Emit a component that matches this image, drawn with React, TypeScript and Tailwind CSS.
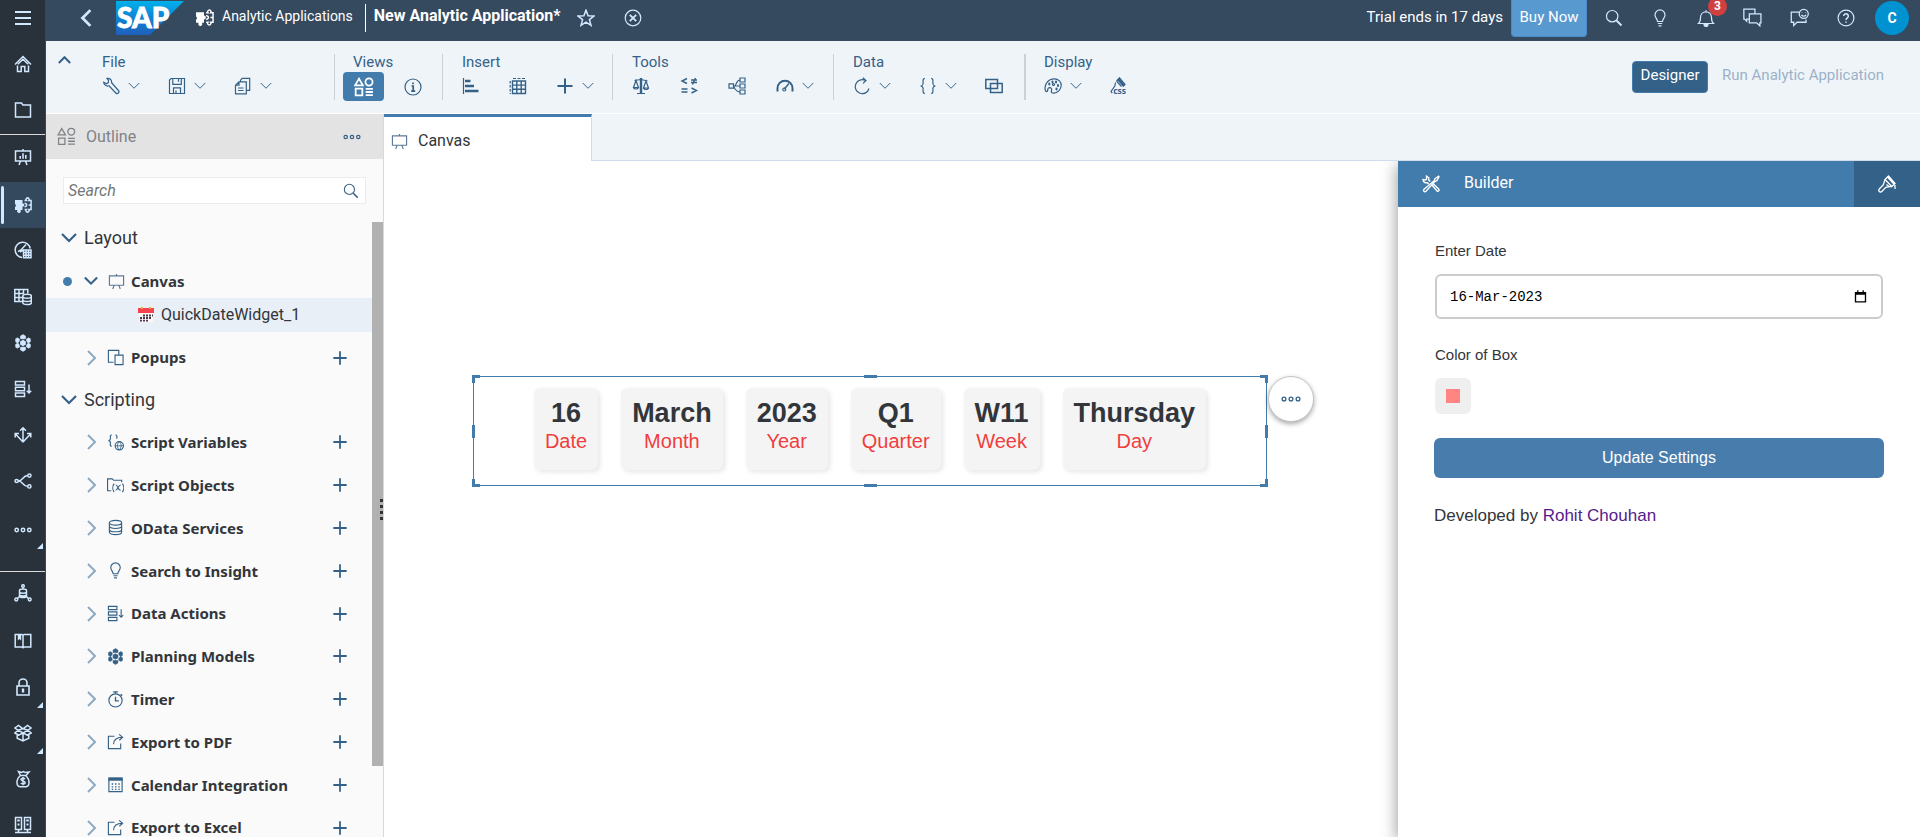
import React from "react";

type IconProps = { name: IconName; className?: string };

const puzzle = (
  <>
    <path d="M1 4h7.5v3.2a1.8 1.8 0 1 1 0 3.6V14H6.6a1.9 1.9 0 1 1-3.2 0H1v-3a1.7 1.7 0 0 0 0-3z" fill="currentColor" stroke="none" />
    <path d="M10.5 4.500h1.800a1.600 1.600 0 1 1 2.600 0h2.200v9h-2.300a1.600 1.600 0 1 1-2.600 0h-1.600M17 9h-2.400" />
    <path d="M10.500 7.500a1.600 1.600 0 1 1 0 3" />
  </>
);

const dataAction = (
  <>
    <path d="M1.500 1.500h9v3.400h-9zM1.500 7.300h9v3.400h-9zM1.500 13.100h9v3.400h-9z" />
    <path d="M15 4.500v8.500M12.800 10.800 15 13l2.200-2.200" />
  </>
);

const honeycomb = (
  <>
    <path d="m9 5.800 2.900 1.600v3.200L9 12.200l-2.900-1.600V7.400z" fill="currentColor" stroke="none" />
    <path
      d="m9 .6 2.600 1.500v2.600L9 5 6.400 4.700V2.100zM14.600 3.800l1.800 1v3l-2.200 1.400-1.700-2.300-.1-1.800zM16.400 10.200v3l-1.800 1-2.200-1.300.1-1.800 1.700-2.200zM9 17.400l-2.600-1.500v-2.600L9 13l2.600.3v2.600zM3.400 14.200l-1.800-1v-3l2.200-1.300 1.700 2.200.1 1.800zM1.600 7.800v-3l1.800-1 2.200 1.300-.1 1.800-1.700 2.300z"
      fill="currentColor"
      strokeWidth="0.500"
    />
  </>
);

const share = (
  <>
    <path d="M8 3.500H1.500v13h13V11" />
    <path d="M7 12c0-5 3.500-7.500 9-7.500M12.800 1.500 16.500 4.500l-3.400 3.200" />
  </>
);

const easel = <path d="M1.500 3h15v10h-15zM9 1v2M6.500 13 5 17M11.500 13l1.500 4" />;

const shapes = (
  <path d="M4.500 1.500 8 7.500H1zM13.500 1.300a3.200 3.200 0 1 1 0 6.400 3.200 3.200 0 0 1 0-6.400zM1.500 10.500h6v6h-6zM10.500 10.700h6.500M10.500 13.500h6.500M10.500 16.300h6.500" />
);

const bulb = (
  <path d="M6.500 12.500c0-2.600-2.500-3.600-2.500-6.600a5 5 0 0 1 10 0c0 3-2.500 4-2.500 6.600zM6.800 14.500h4.400M7.500 16.800h3" />
);

const icons = {
  menu: <path d="M1 3h16M1 9h16M1 15h16" strokeWidth="2" />,
  home: <path d="m1 9.500 8-8 8 8M3.500 10.500v6h3.700v-5h3.600v5h3.700v-6M3.800 9.300 9 4.300l5.200 5" />,
  folder: <path d="M1.500 2h6l1.400 2h7.600v12h-15z" />,
  boardChart: (
    <>
      <path d="M1.500 3h15v10h-15zM9 1v2M6.500 13 5 17M11.500 13l1.500 4" />
      <path d="M6.200 10.800V8M9 10.800V5.200M11.800 10.800V7" strokeWidth="1.600" />
    </>
  ),
  puzzle,
  gaugeGrid: (
    <>
      <path d="M16.200 7.500A7.600 7.600 0 1 0 8 16.400M4 10.500l3-1.500 5-5.500M6 11l3.500-2" />
      <path d="M9.500 9h7.500v7.800H9.500zM9.500 11.600H17M9.500 14.200H17M12 9v7.800M14.500 9v7.800" />
    </>
  ),
  tableDb: (
    <>
      <path d="M9 13.500H.8V1.500h13v4M.8 5.500H10M.8 9.500h7.500M5 1.500v12M9.500 1.500V6" />
      <path d="M8.800 8.200c0-1.200 2-2 4.300-2s4.300.8 4.300 2v6.400c0 1.200-2 2-4.300 2s-4.300-.8-4.300-2zM8.800 8.200c0 1.200 2 2 4.300 2s4.300-.8 4.300-2M8.800 11.500c0 1.200 2 2 4.300 2s4.300-.8 4.300-2" />
    </>
  ),
  honeycomb,
  dataAction,
  arrows: <path d="M9 16.500V1.800M6 4.800l3-3 3 3M9 16 1.500 8M1.200 11.500V7.500H5M9 16l7.500-8M13 7.500h3.800v4" />,
  flow: (
    <>
      <circle cx="2.600" cy="9" r="1.600" />
      <circle cx="15.400" cy="3.600" r="1.600" />
      <circle cx="15.400" cy="14.400" r="1.600" />
      <path d="M4.200 9c5 0 4-5.400 9.600-5.400M4.200 9c5 0 4 5.400 9.600 5.400" />
    </>
  ),
  dots: (
    <>
      <circle cx="2.700" cy="9" r="1.700" />
      <circle cx="9" cy="9" r="1.700" />
      <circle cx="15.300" cy="9" r="1.700" />
    </>
  ),
  dataNet: (
    <>
      <circle cx="9" cy="2" r="1.300" />
      <circle cx="2.300" cy="15.500" r="1.400" />
      <circle cx="15.700" cy="15.500" r="1.400" />
      <path d="M5.500 6.500c0-1 1.500-1.600 3.500-1.600s3.500.6 3.500 1.600v5.500c0 1-1.500 1.600-3.500 1.600S5.500 13 5.500 12zM5.500 8.300c1 1.200 6 1.200 7 0M5.500 11c1 1.200 6 1.200 7 0M3.500 14.500l2-2M14.500 14.500l-2-2M9 3.300v1.500" />
    </>
  ),
  book: (
    <>
      <path d="M9 3.500v12M1.200 2.500H8l1 .8 1-.8h6.800v12.500H10l-1 .8-1-.8H1.200z" />
      <path d="M3.800 2.500h3.400v6l-1.700-1.400-1.700 1.400z" fill="currentColor" stroke="none" />
    </>
  ),
  lock: (
    <>
      <path d="M3 8h12v9H3zM5 8V5a4 4 0 0 1 8 0v3" strokeWidth="1.600" />
      <path d="M9 10.500v4" strokeWidth="2.400" />
    </>
  ),
  box: <path d="M9 4.800 4.500 1.500.8 4 4 6.200zM9 4.800l4.500-3.300L17.200 4 14 6.200zM4 6.200 9 8.800l5-2.600M4 6.200.8 9l4 2.200L9 8.800l4.200 2.400 4-2.200L14 6.200M3.200 10.500v3.700L9 17l5.800-2.800v-3.700M9 8.800V17" />,
  moneyBag: (
    <>
      <path d="M6.500 5.500 4.500 1.500l3 1 2-1 1.500 1 4-.5-3 3.500M6.500 5.500h5C14.500 8 15.200 10.500 15 13c-.1 2.200-1.500 3.700-3.500 3.700h-5C4.500 16.700 3.100 15.200 3 13c-.2-2.500.5-5 3.500-7.500z" />
      <path d="M11 9.200c-.4-.7-1.200-1-2-1-1.100 0-2 .5-2 1.400 0 2 4.100 1 4.100 3 0 1-1 1.500-2.100 1.500-1 0-1.800-.4-2.200-1.100M9 7v8.300" />
    </>
  ),
  servers: (
    <>
      <path d="M1.500 1.500h6v12h-6zM10.500 1.500h6v12h-6zM4.500 13.500V16M13.500 13.500V16M1 16.500h16" />
      <path d="M3.200 4.500h2.600M12.200 4.500h2.600M3.500 8.500h2M12.500 8.500h2" strokeWidth="1.800" />
    </>
  ),
  star: <path d="m9 1.200 2.100 5.500 5.900.3-4.600 3.600 1.600 5.700L9 13.100l-5 3.200 1.600-5.700L1 7l5.900-.3z" />,
  close: (
    <>
      <circle cx="9" cy="9" r="7.800" />
      <path d="m5.800 5.800 6.400 6.400M12.200 5.800l-6.400 6.400" strokeWidth="1.800" />
    </>
  ),
  search: (
    <>
      <circle cx="7.200" cy="7.200" r="5.700" />
      <path d="m11.500 11.500 5 5" strokeWidth="1.800" />
    </>
  ),
  bulb,
  bell: (
    <>
      <path d="M1.500 14.500h15c-1.800-1.500-2-3-2-6C14.500 5 12 2.800 9 2.800S3.500 5 3.500 8.500c0 3-.2 4.500-2 6zM9 1.200v1.500" />
      <path d="M7 15.500h4a2 2 0 0 1-4 0z" fill="currentColor" />
    </>
  ),
  chat: <path d="M5.500 10.500H3.500v2L1.500 10.500h-.7v-9.500h10.500v4M6 5.500h11v8.500h-1v3l-3-3H6z" />,
  feedback: (
    <>
      <path d="M8.500 4H1.200v9.500h2.300v3l3.200-3h8.500V11" />
      <circle cx="13" cy="5.500" r="4.300" />
      <path d="M10.800 6.300c.8 1.900 3.600 1.900 4.400 0M11.300 4.200v.6M14.700 4.200v.6" />
    </>
  ),
  help: (
    <>
      <circle cx="9" cy="9" r="7.900" />
      <path d="M6.700 7a2.300 2.300 0 1 1 3.700 1.900c-.9.600-1.400 1-1.400 2M9 12.500v1.300" strokeWidth="1.500" />
    </>
  ),
  wrench: <path d="M5 1.400c2.600-.6 5 1.400 4.600 4.300l6.800 7.800a1.800 1.800 0 0 1-2.600 2.500L7 8.800c-2.500.8-5.300-.8-5.300-3.600l2.800 1.600 1.900-1.200.1-2.100z" />,
  save: <path d="M3 1.500h13.500v15h-15V3zM4.800 1.500v5.800h8.500V1.500M5.500 16.500v-5.700h7v5.700M8 13.500v3M10.500 2v2.800" />,
  copy: (
    <>
      <path d="M5 4.800h7.300v12H1.500V8.200zM5 4.800v3.400H1.500M6.500 4.800v-1.600L8.200 1.300h7.500v12h-3.400" />
      <path d="M4 11h5.500M4 13.500h5.500" />
    </>
  ),
  shapes,
  info: (
    <>
      <circle cx="9" cy="9" r="8" />
      <path d="M7.500 8H9.200v5M7.200 13.200h4M9 4.500v1.700" strokeWidth="1.700" />
    </>
  ),
  bars: (
    <>
      <path d="M1.500 1v16" />
      <path d="M3 4h5.500M3 9h9M3 14h13.500" strokeWidth="2.400" />
    </>
  ),
  grid: (
    <>
      <path d="M3.500 4h13v12.500h-13zM3.500 8.100h13M3.500 12.300h13M7.800 4v12.500M12.200 4v12.500" strokeWidth="1.400" />
      <path d="M4 1.500h13" strokeDasharray="3 1.500" />
      <path d="M1.200 4v13" strokeDasharray="2.500 1.500" />
    </>
  ),
  plus: <path d="M9 1.500v15M1.500 9h15" strokeWidth="2" />,
  scales: (
    <>
      <path d="M2.500 3.500 9 2.500l6.500 1.500M4 3.500 1.500 10.500h5zM14 4l-2.500 7h5zM1.500 10.500c.5 2 4.500 2 5 0M11.500 11c.5 2 4.500 2 5 0M5 16.500h8" />
      <path d="M9 1v15" strokeWidth="2.400" />
    </>
  ),
  operators: <path d="m7 1.500-5 2.500 5 2.500M11 3h6M11 5.500h6M15.500 1l-3 6.500M1.500 12h6M1.500 15h6M11.500 11l5 2.500-5 2.500" strokeWidth="1.400" />,
  hierarchy: <path d="M1 6.800h4.500v4.400H1zM12 1h5v4h-5zM12 7h5v4h-5zM12 13h5v4h-5zM5.500 9H12M12 3C8 3 8.500 9 6.500 9S8 15 12 15" />,
  gauge: (
    <>
      <path d="M1.500 14.500v-3.300a7.500 7.500 0 0 1 15 0v3.300" strokeWidth="2" />
      <path d="M13 6.500 8.300 12" strokeWidth="1.500" />
      <circle cx="8.300" cy="12.500" r="1.500" />
    </>
  ),
  refresh: <path d="M16 11.500A7 7 0 1 1 12.500 3.500M9.800.800l3.200 2.700-3 2.900" />,
  braces: <path d="M6 1.500C3 1.500 4.500 5 4 7c-.2 1-1 2-2.500 2 1.500 0 2.300 1 2.500 2 .5 2-1 5.500 2 5.500M12 1.500c3 0 1.500 3.500 2 5.500.2 1 1 2 2.500 2-1.500 0-2.300 1-2.500 2-.5 2 1 5.500-2 5.500" />,
  overlap: <path d="M.800 2.500h11.700v9H.800zM5.500 6.500h11.700v9H5.500z" strokeWidth="1.500" />,
  palette: (
    <>
      <path d="M10.500 1.800c3.600 0 6.700 2.600 6.700 6.400 0 4-3.300 7.800-7.500 8-2.400 0-2.600-1.300-2.200-2.700.5-1.600-.2-2.900-1.700-2.900C4.200 10.600 3.500 12 3.700 13.500c0 1.500-2 1.500-2.500-.5C.2 8 3.500 1.800 10.500 1.800z" />
      <path d="M5.300 6.600v1M8.500 4.400v1M12 4.600v1M14 8v1M12.500 11.500v1" strokeWidth="2" strokeLinecap="round" />
      <circle cx="9.500" cy="7.500" r="1" />
    </>
  ),
  css: (
    <>
      <path d="M6.500 4 9.500.8l5.500 6.700-2 2M6.500 4l5 5.500M5.500 5.500 4.800 9 1 14.500l1.200 1.700" />
      <path d="m8.200 2.200 5.600 6.500" strokeWidth="2.600" />
      <text x="3.200" y="17.300" fontSize="8.500" fontWeight="700" fill="currentColor" stroke="none" fontFamily="Noto Sans, sans-serif">css</text>
    </>
  ),
  easel,
  popups: <path d="M7 14H1.500V1.500h11V6M8.500 6.500h8.500v10H8.500z" />,
  scriptVar: (
    <>
      <path d="M5 1C2.500 1 4 4 3.500 5.500c-.2 1-.8 1.500-2 1.500 1.200 0 1.800.600 2 1.500C4 10 2.500 13 5 13M9 1c2.200 0 1.200 2.200 1.500 4" />
      <circle cx="13" cy="12.500" r="4.400" />
      <path d="M8.600 12.500h8.800M13 8.100c-2.600 2.500-2.600 6.300 0 8.800M13 8.100c2.600 2.500 2.600 6.300 0 8.800" strokeWidth=".900" />
    </>
  ),
  scriptObj: (
    <>
      <path d="M4.500 14.500H.600V2h5l1.500 1.500h8.400V5.500" />
      <path d="M7.500 7c-1.800 2.500-1.800 6.500 0 9M16.300 7c1.800 2.500 1.800 6.500 0 9" />
      <path d="M9.300 8.500c2.300-.3 2.200 6 5.200 5.500M14.500 8.500c-2.200 0-3.500 5.500-5.500 5.500" />
    </>
  ),
  database: <path d="M2.500 4c0-1.600 3-2.500 6.500-2.500s6.500.9 6.500 2.500v10c0 1.600-3 2.500-6.500 2.500S2.500 15.600 2.500 14zM2.500 4c0 1.600 3 2.500 6.500 2.500s6.500-.9 6.500-2.500M2.500 7.500C2.500 9.100 5.500 10 9 10s6.500-.9 6.500-2.500M2.500 11c0 1.600 3 2.500 6.500 2.500s6.500-.9 6.500-2.500" />,
  timer: (
    <>
      <circle cx="9" cy="10" r="7" />
      <path d="M6.500 1h5M9 1v2M9 6v4.500h3.500M14.500 3.500l1.500 1.500" strokeWidth="1.400" />
    </>
  ),
  share,
  calendar: (
    <>
      <path d="M2 2.500h14v14H2z" />
      <path d="M1.500 1.500h15v3.500h-15z" fill="currentColor" stroke="none" />
      <path d="M5 8.500h9M5 11.500h9M5 14.200h9" strokeWidth="1.500" strokeDasharray="1.500 2" />
    </>
  ),
  tools: (
    <path d="m10 10 5.200 6.200a1.300 1.300 0 0 0 1.600-1.900L11.500 9M8.200 6.500 6.700 5l.1-2.200L4.500 1.200 4.600 4 3.500 5 1 4.600C1.200 7.200 3.500 8.300 5.400 7.700L6.600 9M16.500 1.200l-3.700 2.600-.3 1.700L2 14.200a1.400 1.400 0 1 0 2 2.100L13 6.300l1.700-.5 2.300-4z" strokeWidth="1.400" />
  ),
  brush: (
    <>
      <path d="m10.500 1 6.500 7.500-3.200 3-6.800-7zM7 4.500 5.400 9.700 1.300 14a1.700 1.700 0 0 0 2.500 2.500l4-4.200 5.500-1M8.500 9.500l2.500 2M17 10v4" strokeWidth="1.300" />
      <path d="m9.700 1.800 6.400 7" strokeWidth="1.800" />
    </>
  ),
  datePicker: (
    <>
      <path d="M3 4.500h12v11H3z" strokeWidth="1.600" />
      <path d="M2.500 3.500h13v3.500h-13zM5 1.500h1.500v2H5zM11.500 1.500H13v2h-1.500z" fill="currentColor" stroke="none" />
    </>
  ),
};

type IconName = keyof typeof icons;

function Icon({ name, className = "size-[18px]" }: IconProps) {
  return (
    <svg viewBox="0 0 18 18" fill="none" stroke="currentColor" strokeWidth="1.200" className={`shrink-0 ${className}`} aria-hidden="true">
      {icons[name]}
    </svg>
  );
}

function Chevron({ dir, className }: { dir: "down" | "up" | "right" | "left"; className: string }) {
  const d = {
    down: "M1 4l7 7 7-7",
    up: "M1 11l7-7 7 7",
    right: "M5 1l7 7-7 7",
    left: "M11 1 4 8l7 7",
  }[dir];
  return (
    <svg viewBox="0 0 16 16" fill="none" stroke="currentColor" className={`shrink-0 ${className}`} aria-hidden="true">
      <path d={d} />
    </svg>
  );
}

function RailItem({ icon, label, active, more, className = "h-[46px]" }: { icon: IconName; label: string; active?: boolean; more?: boolean; className?: string }) {
  return (
    <button aria-label={label} className={`relative flex w-full shrink-0 items-center justify-center ${className} ${active ? "bg-[#34495e]" : ""}`}>
      {active && <span className="absolute inset-y-1 left-px w-[3px] rounded-sm bg-[#d1e8ff]" />}
      <Icon name={icon} className="size-[18px] stroke-[1.500]" />
      {more && (
        <svg viewBox="0 0 6 6" className="absolute right-0.5 bottom-0.5 size-1.5" aria-hidden="true">
          <path d="M6 0v6H0z" fill="currentColor" />
        </svg>
      )}
    </button>
  );
}

function Rail() {
  return (
    <nav className="flex w-[46px] shrink-0 flex-col overflow-hidden border-r border-[#3b4754] bg-[#29313a] text-[#d1e8ff]">
      <RailItem icon="menu" label="Menu" className="h-9" />
      <div className="h-[5px] shrink-0" />
      <RailItem icon="home" label="Home" />
      <RailItem icon="folder" label="Files" />
      <div className="mt-px h-px shrink-0 bg-[#d9d9d9]" />
      <RailItem icon="boardChart" label="Stories" className="h-[47px] pb-1" />
      <RailItem icon="puzzle" label="Analytic Applications" active />
      <RailItem icon="gaugeGrid" label="Analytics Designer" className="h-[46px] pb-0.5" />
      <RailItem icon="tableDb" label="Datasets" />
      <RailItem icon="honeycomb" label="Modeler" />
      <RailItem icon="dataAction" label="Data Actions" />
      <RailItem icon="arrows" label="Allocations" />
      <RailItem icon="flow" label="Predictive Scenarios" />
      <RailItem icon="dots" label="More" more className="h-[47px] pt-1" />
      <div className="mt-5 h-px shrink-0 bg-[#d9d9d9]" />
      <RailItem icon="dataNet" label="Connections" className="h-[46px] pb-1" />
      <RailItem icon="book" label="Content Network" />
      <RailItem icon="lock" label="Security" more />
      <RailItem icon="box" label="Transport" more />
      <RailItem icon="moneyBag" label="Currency" />
      <RailItem icon="servers" label="System" />
    </nav>
  );
}

function SapLogo() {
  return (
    <svg viewBox="0 0 68 34" className="h-[34px] w-[68px] shrink-0" role="img" aria-label="SAP">
      <defs>
        <linearGradient id="sap" x1="0" y1="0" x2="0" y2="1">
          <stop offset="0" stopColor="#00b1eb" />
          <stop offset="0.500" stopColor="#1183d2" />
          <stop offset="1" stopColor="#1e5fbb" />
        </linearGradient>
      </defs>
      <path d="M0 0h68L34 34H0z" fill="url(#sap)" />
      <text x="1" y="27" fontSize="28" fontWeight="900" fontFamily="Lato, Liberation Sans, sans-serif" fill="#fff" stroke="#fff" strokeWidth="0.800">SAP</text>
    </svg>
  );
}

function TopBar() {
  return (
    <header className="flex h-[41px] shrink-0 items-start justify-between bg-[#354a5f] text-white">
      <div className="flex h-[35px] items-center">
        <button aria-label="Back" className="ml-8 text-[#d1e8ff]">
          <Chevron dir="left" className="size-[18px] stroke-[2.500]" />
        </button>
        <div className="ml-5">
          <SapLogo />
        </div>
        <Icon name="puzzle" className="ml-[11px] size-[19px] stroke-[1.400]" />
        <a href="#apps" className="ml-2 flex h-7 items-center border-r border-white pr-3 pb-1 text-sm">Analytic Applications</a>
        <h1 className="ml-2 pb-1 text-base leading-6 font-bold">New Analytic Application*</h1>
        <button aria-label="Add to favorites" className="ml-4 text-[#d1e8ff]"><Icon name="star" className="size-[18px] stroke-[1.500]" /></button>
        <button aria-label="Close" className="ml-[29px] text-[#d1e8ff]"><Icon name="close" /></button>
      </div>
      <div className="flex h-[35px] items-center pr-[11px] text-[#d1e8ff]">
        <span className="text-white">Trial ends in 17 days</span>
        <button className="mr-[18px] ml-2 h-[37px] w-[76px] self-start rounded-b border border-t-0 border-[#4a8bcb] bg-[#5899d0] pb-0.5 text-white">Buy Now</button>
        <div className="mr-5 flex items-center gap-7">
          <button aria-label="Search"><Icon name="search" className="size-[18px]" /></button>
          <button aria-label="Tips"><Icon name="bulb" className="size-[18px]" /></button>
          <button aria-label="Notifications, 3 new" className="relative">
            <Icon name="bell" className="size-[18px]" />
            <span className="absolute -top-3 left-[11px] flex size-[19px] items-center justify-center rounded-full bg-[#d13f3f] text-xs font-bold text-white">3</span>
          </button>
          <button aria-label="Discussions"><Icon name="chat" className="size-[19px]" /></button>
          <button aria-label="Feedback"><Icon name="feedback" className="size-[19px]" /></button>
          <button aria-label="Help"><Icon name="help" className="size-[18px]" /></button>
        </div>
        <button aria-label="User profile" className="size-[34px] rounded-full bg-[#0092d1] text-sm font-bold text-white">C</button>
      </div>
    </header>
  );
}

function Tool({ icon, label, menu }: { icon: IconName; label: string; menu?: boolean }) {
  return (
    <button aria-label={label} className="flex items-center gap-2">
      <Icon name={icon} />
      {menu && <Chevron dir="down" className="size-3 stroke-[1.300]" />}
    </button>
  );
}

function ToolGroup({ label, className, gap = "gap-7", children }: { label: string; className: string; gap?: string; children: React.ReactNode }) {
  return (
    <section className={`flex h-[46px] shrink-0 flex-col border-[#c8d0da] ${className}`}>
      <h2 className="h-[18px] leading-4">{label}</h2>
      <div className={`flex h-7 items-center ${gap}`}>{children}</div>
    </section>
  );
}

function Toolbar() {
  return (
    <div className="flex h-[72px] shrink-0 items-start bg-[#eff4f9] pt-[13px] text-[#346187]">
      <button aria-label="Collapse toolbar" className="mr-[31px] ml-3 flex h-3">
        <Chevron dir="up" className="size-[13px] stroke-[2.400]" />
      </button>
      <ToolGroup label="File" className="w-[233px] border-r">
        <Tool icon="wrench" label="Edit" menu />
        <Tool icon="save" label="Save" menu />
        <Tool icon="copy" label="Copy" menu />
      </ToolGroup>
      <section className="h-[46px] w-[108px] shrink-0 border-r border-[#c8d0da] pl-2">
        <h2 className="h-[18px] pl-[10px] leading-4">Views</h2>
        <div className="flex h-[29px] items-center gap-5">
          <button aria-label="Outline" className="flex h-[29px] w-[41px] items-center justify-center rounded bg-[#427cac] text-white">
            <Icon name="shapes" className="size-5 stroke-[1.600]" />
          </button>
          <button aria-label="Info"><Icon name="info" /></button>
        </div>
      </section>
      <ToolGroup label="Insert" className="w-[170px] border-r pl-[19px]" gap="gap-[29px]">
        <Tool icon="bars" label="Chart" />
        <Tool icon="grid" label="Table" />
        <Tool icon="plus" label="Add" menu />
      </ToolGroup>
      <ToolGroup label="Tools" className="w-[221px] border-r pl-[19px]" gap="gap-[30px]">
        <Tool icon="scales" label="Compare" />
        <Tool icon="operators" label="Formatting" />
        <Tool icon="hierarchy" label="Linked Analysis" />
        <Tool icon="gauge" label="Performance" menu />
      </ToolGroup>
      <ToolGroup label="Data" className="w-[192px] border-r-2 pl-[19px]">
        <Tool icon="refresh" label="Refresh" menu />
        <Tool icon="braces" label="Variables" menu />
        <Tool icon="overlap" label="Blending" />
      </ToolGroup>
      <ToolGroup label="Display" className="pl-[18px]">
        <Tool icon="palette" label="Theme" menu />
        <Tool icon="css" label="CSS editor" />
      </ToolGroup>
      <div className="ml-auto flex items-start pt-[7px] pr-9">
        <button className="h-8 w-[76px] rounded border border-[#427cac] bg-[#346187] pb-1 text-white">Designer</button>
        <button className="ml-[14px] h-7 text-[#9cb2c8]">Run Analytic Application</button>
      </div>
    </div>
  );
}

function WidgetIcon() {
  return (
    <svg viewBox="0 0 16 16" className="size-4 shrink-0" aria-hidden="true">
      <path d="M1 5h14v10H1z" fill="#fff5f5" />
      <path d="M0 1h16v5H0z" fill="#f4434f" />
      <path d="M3 0h2v2H3zM11 0h2v2h-2z" fill="#f3a53a" />
      <path d="M5 8.500h10M2 11h12M2 13.700h9" stroke="#4a3a50" strokeWidth="1.800" strokeDasharray="2 1" />
    </svg>
  );
}

const scripting: { icon: IconName; label: string }[] = [
  { icon: "scriptVar", label: "Script Variables" },
  { icon: "scriptObj", label: "Script Objects" },
  { icon: "database", label: "OData Services" },
  { icon: "bulb", label: "Search to Insight" },
  { icon: "dataAction", label: "Data Actions" },
  { icon: "honeycomb", label: "Planning Models" },
  { icon: "timer", label: "Timer" },
  { icon: "share", label: "Export to PDF" },
  { icon: "calendar", label: "Calendar Integration" },
  { icon: "share", label: "Export to Excel" },
];

function TreeRow({ icon, label, className }: { icon: IconName; label: string; className: string }) {
  return (
    <li className={`flex items-center pr-6 pl-[37px] ${className}`}>
      <button aria-label={`Expand ${label}`} className="text-[#8fa9c2]">
        <Chevron dir="right" className="size-4 stroke-[2]" />
      </button>
      <Icon name={icon} className="ml-2 size-[17px] text-[#346187]" />
      <span className="ml-[7px] grow font-['Noto_Sans'] text-[15px] font-bold">{label}</span>
      <button aria-label={`Add ${label}`} className="text-[#346187]">
        <Icon name="plus" className="size-4" />
      </button>
    </li>
  );
}

function SectionTitle({ label, className }: { label: string; className: string }) {
  return (
    <button className={`flex shrink-0 items-center gap-[7px] pl-[15px] text-lg ${className}`}>
      <Chevron dir="down" className="size-4 stroke-[2.200] text-[#346187]" />
      {label}
    </button>
  );
}

function Outline() {
  return (
    <aside className="relative flex w-[338px] shrink-0 flex-col overflow-hidden border-r border-[#d9d9d9] bg-[#fafafa] text-[#32363a]">
      <div className="flex h-[45px] shrink-0 items-center bg-[#e3e3e3] pr-[22px] pl-[11px] text-[#7f8286]">
        <Icon name="shapes" className="size-[19px]" />
        <h2 className="ml-[10px] grow text-base">Outline</h2>
        <button aria-label="Outline options" className="text-[#346187]"><Icon name="dots" className="size-[18px]" /></button>
      </div>
      <label className="mx-[17px] mt-[18px] flex h-[27px] shrink-0 items-center border border-[#ececec] bg-white px-1">
        <input type="search" placeholder="Search" aria-label="Search" className="min-w-0 grow text-base italic outline-none placeholder:text-[#74777a]" />
        <Icon name="search" className="mr-0.5 size-4 text-[#346187]" />
      </label>
      <div className="mt-[18px] flex min-h-0 grow">
        <div className="flex min-w-0 grow flex-col overflow-hidden">
          <SectionTitle label="Layout" className="h-8" />
          <div className="mt-[11px] mb-px flex h-8 shrink-0 items-center pl-[17px]">
            <span className="size-[9px] rounded-full bg-[#427cac]" />
            <button aria-label="Collapse Canvas" className="ml-3 text-[#346187]"><Chevron dir="down" className="size-[14px] stroke-[2.400]" /></button>
            <Icon name="easel" className="ml-[10px] size-[17px] text-[#5d7896]" />
            <span className="ml-[6px] font-['Noto_Sans'] text-[15px] font-bold">Canvas</span>
          </div>
          <div className="flex h-[34px] shrink-0 items-center gap-[7px] bg-[#e8eff7] pl-[92px]">
            <WidgetIcon />
            <span className="text-base">QuickDateWidget_1</span>
          </div>
          <ul className="shrink-0 pt-1"><TreeRow icon="popups" label="Popups" className="h-[43px]" /></ul>
          <SectionTitle label="Scripting" className="h-[42px]" />
          <ul className="flex h-[428px] shrink-0 flex-col">
            {scripting.map((row) => (
              <TreeRow key={row.label} icon={row.icon} label={row.label} className="flex-1" />
            ))}
          </ul>
        </div>
        <div className="w-[11px] shrink-0">
          <div className="h-[88.500%] bg-[#b1b1b1]" />
        </div>
      </div>
      <div className="absolute right-0 bottom-[317px] flex flex-col gap-[3px]">
        <span className="size-[3px] bg-[#333]" />
        <span className="size-[3px] bg-[#333]" />
        <span className="size-[3px] bg-[#333]" />
        <span className="size-[3px] bg-[#333]" />
      </div>
    </aside>
  );
}

const cards = [
  ["16", "Date"],
  ["March", "Month"],
  ["2023", "Year"],
  ["Q1", "Quarter"],
  ["W11", "Week"],
  ["Thursday", "Day"],
];

function DateWidget() {
  return (
    <div className="relative mt-[215px] ml-[89px] h-[110px] w-[794px] shrink-0 border border-[#427cac] font-['Liberation_Sans',sans-serif]">
      <div className="flex justify-center gap-[23px] pt-[11px]">
        {cards.map(([value, label]) => (
          <div key={label} className="h-[82px] rounded-md bg-[#f4f4f4] px-[11px] pt-2 text-center shadow-[2px_2px_5px_rgba(0,0,0,0.1)]">
            <div className="text-[27px] leading-[34px] font-bold text-[#32363a]">{value}</div>
            <div className="text-xl leading-[22px] text-[#f03e3e]">{label}</div>
          </div>
        ))}
      </div>
      <span className="absolute -top-0.5 -left-0.5 size-2 border-t-[3px] border-l-[3px] border-[#427cac]" />
      <span className="absolute -top-0.5 -right-0.5 size-2 border-t-[3px] border-r-[3px] border-[#427cac]" />
      <span className="absolute -bottom-0.5 -left-0.5 size-2 border-b-[3px] border-l-[3px] border-[#427cac]" />
      <span className="absolute -right-0.5 -bottom-0.5 size-2 border-r-[3px] border-b-[3px] border-[#427cac]" />
      <span className="absolute inset-x-0 -top-0.5 mx-auto h-[3px] w-[13px] bg-[#427cac]" />
      <span className="absolute inset-x-0 -bottom-0.5 mx-auto h-[3px] w-[13px] bg-[#427cac]" />
      <span className="absolute inset-y-0 -left-0.5 my-auto h-[13px] w-[3px] bg-[#427cac]" />
      <span className="absolute inset-y-0 -right-0.5 my-auto h-[13px] w-[3px] bg-[#427cac]" />
      <button aria-label="Widget actions" className="absolute -top-px left-full ml-0.5 flex size-[46px] items-center justify-center rounded-full border border-[#c4c4c4] bg-white text-[#346187] shadow-[0_2px_5px_rgba(0,0,0,0.35)]">
        <Icon name="dots" className="size-5" />
      </button>
    </div>
  );
}

function Builder() {
  return (
    <aside className="flex w-[522px] shrink-0 flex-col bg-white shadow-[-2px_4px_14px_rgba(0,0,0,0.35)]">
      <div className="flex h-[46px] shrink-0 items-center bg-[#427cac] pl-6 text-white">
        <Icon name="tools" />
        <h2 className="ml-6 grow pb-0.5 text-base">Builder</h2>
        <button aria-label="Styling" className="flex h-full w-[66px] items-center justify-center bg-[#346187]"><Icon name="brush" /></button>
      </div>
      <form className="flex flex-col px-9 pt-[34px] font-['Liberation_Sans',sans-serif] text-[15px] text-[#32363a]" onSubmit={(e) => e.preventDefault()}>
        <label htmlFor="date" className="ml-px leading-5">Enter Date</label>
        <div className="mx-px mt-[13px] flex h-[45px] items-center rounded-md border-2 border-[#ccc] px-[13px]">
          <input id="date" type="text" defaultValue="16-Mar-2023" className="min-w-0 grow font-['Liberation_Mono',monospace] text-sm text-black outline-none" />
          <button type="button" aria-label="Pick date" className="text-black"><Icon name="datePicker" className="size-[15px]" /></button>
        </div>
        <label htmlFor="color" className="mt-[26px] ml-px leading-5">Color of Box</label>
        <input
          id="color"
          type="color"
          defaultValue="#ff8583"
          className="mt-[13px] ml-px size-9 rounded-md bg-[#efefef] p-[11px] [&::-webkit-color-swatch]:rounded-none [&::-webkit-color-swatch]:border-0 [&::-webkit-color-swatch-wrapper]:p-0"
        />
        <button type="submit" className="mt-6 h-10 rounded-md bg-[#487cac] text-base text-white">Update Settings</button>
        <p className="mt-[26px] text-[17px] leading-6">
          Developed by <a href="#author" className="text-[#551a8b]">Rohit Chouhan</a>
        </p>
      </form>
    </aside>
  );
}

export default function App() {
  return (
    <div className="flex h-screen overflow-hidden bg-white font-[Roboto,sans-serif] text-[15px]">
      <Rail />
      <div className="flex min-w-0 grow flex-col">
        <TopBar />
        <Toolbar />
        <div className="flex min-h-0 grow border-t border-white">
          <Outline />
          <main className="flex min-w-0 grow flex-col">
            <div className="flex h-[47px] shrink-0 border-b border-[#cfdcec] bg-[#eff4f9]">
              <button className="-mb-px flex w-[208px] items-center gap-[10px] border-t-[3px] border-r border-t-[#427cac] border-r-[#cfdcec] bg-white pt-1 pl-[7px] text-base text-[#32363a]">
                <Icon name="easel" className="size-[17px] text-[#5d7896]" />
                Canvas
              </button>
            </div>
            <div className="flex min-h-0 grow overflow-hidden">
              <div className="flex min-w-0 grow flex-col">
                <DateWidget />
              </div>
              <Builder />
            </div>
          </main>
        </div>
      </div>
    </div>
  );
}
